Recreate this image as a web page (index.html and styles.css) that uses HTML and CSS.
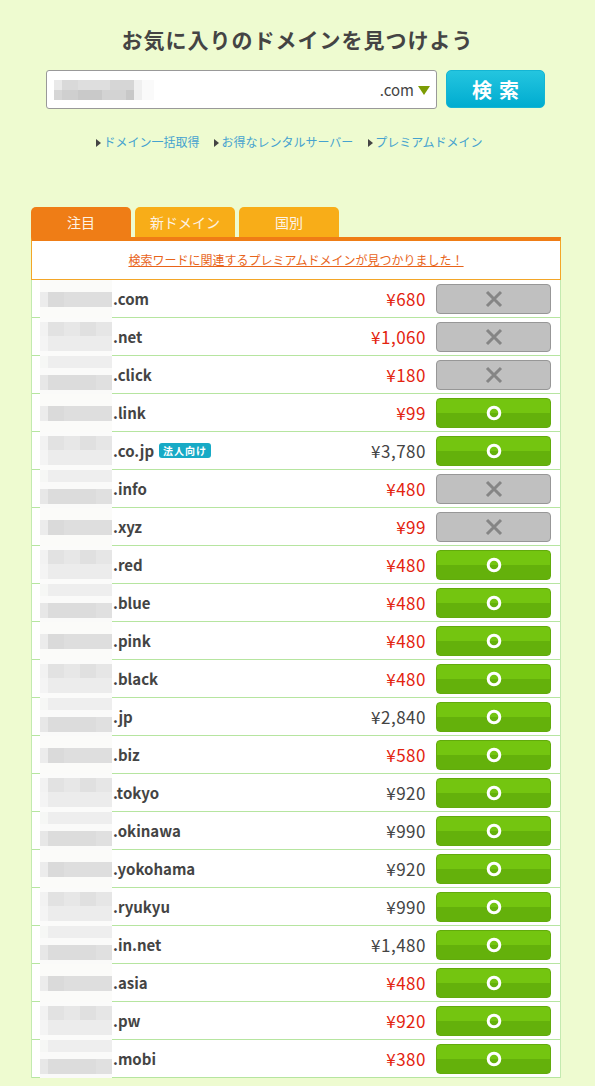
FILE: index.html
```html
<!DOCTYPE html>
<html lang="ja">
<head>
    <meta charset="UTF-8">
    <meta name="viewport" content="width=device-width, initial-scale=1.0">
    <title>ドメイン検索</title>
    <link rel="stylesheet" href="styles.css">
</head>
<body>
    <h1 class="title">お気に入りのドメインを見つけよう</h1>

    <div class="search">
        <div class="search-box">
            <span class="blur-text"></span>
            <span class="tld">.com</span>
            <span class="arrow"></span>
        </div>
        <button class="search-btn">検索</button>
    </div>

    <ul class="links">
        <li><a href="#">ドメイン一括取得</a></li>
        <li><a href="#">お得なレンタルサーバー</a></li>
        <li><a href="#">プレミアムドメイン</a></li>
    </ul>

    <div class="panel">
        <div class="tabs">
            <div class="tab active">注目</div>
            <div class="tab">新ドメイン</div>
            <div class="tab">国別</div>
        </div>
        <div class="notice"><a href="#">検索ワードに関連するプレミアムドメインが見つかりました！</a></div>

        <div class="list">
            <div class="row"><span class="blur b1"></span><span class="name">.com</span><span class="price">¥680</span><span class="btn ng"><svg width="18" height="18" viewBox="0 0 18 18"><path d="M2 2L16 16M16 2L2 16"/></svg></span></div>
            <div class="row"><span class="blur b2"></span><span class="name">.net</span><span class="price">¥1,060</span><span class="btn ng"><svg width="18" height="18" viewBox="0 0 18 18"><path d="M2 2L16 16M16 2L2 16"/></svg></span></div>
            <div class="row"><span class="blur b3"></span><span class="name">.click</span><span class="price">¥180</span><span class="btn ng"><svg width="18" height="18" viewBox="0 0 18 18"><path d="M2 2L16 16M16 2L2 16"/></svg></span></div>
            <div class="row"><span class="blur b1"></span><span class="name">.link</span><span class="price">¥99</span><span class="btn ok"><svg width="16" height="16" viewBox="0 0 16 16"><circle cx="8" cy="8" r="5.8"/></svg></span></div>
            <div class="row"><span class="blur b2"></span><span class="name">.co.jp</span><span class="badge">法人向け</span><span class="price normal">¥3,780</span><span class="btn ok"><svg width="16" height="16" viewBox="0 0 16 16"><circle cx="8" cy="8" r="5.8"/></svg></span></div>
            <div class="row"><span class="blur b3"></span><span class="name">.info</span><span class="price">¥480</span><span class="btn ng"><svg width="18" height="18" viewBox="0 0 18 18"><path d="M2 2L16 16M16 2L2 16"/></svg></span></div>
            <div class="row"><span class="blur b1"></span><span class="name">.xyz</span><span class="price">¥99</span><span class="btn ng"><svg width="18" height="18" viewBox="0 0 18 18"><path d="M2 2L16 16M16 2L2 16"/></svg></span></div>
            <div class="row"><span class="blur b2"></span><span class="name">.red</span><span class="price">¥480</span><span class="btn ok"><svg width="16" height="16" viewBox="0 0 16 16"><circle cx="8" cy="8" r="5.8"/></svg></span></div>
            <div class="row"><span class="blur b3"></span><span class="name">.blue</span><span class="price">¥480</span><span class="btn ok"><svg width="16" height="16" viewBox="0 0 16 16"><circle cx="8" cy="8" r="5.8"/></svg></span></div>
            <div class="row"><span class="blur b1"></span><span class="name">.pink</span><span class="price">¥480</span><span class="btn ok"><svg width="16" height="16" viewBox="0 0 16 16"><circle cx="8" cy="8" r="5.8"/></svg></span></div>
            <div class="row"><span class="blur b2"></span><span class="name">.black</span><span class="price">¥480</span><span class="btn ok"><svg width="16" height="16" viewBox="0 0 16 16"><circle cx="8" cy="8" r="5.8"/></svg></span></div>
            <div class="row"><span class="blur b3"></span><span class="name">.jp</span><span class="price normal">¥2,840</span><span class="btn ok"><svg width="16" height="16" viewBox="0 0 16 16"><circle cx="8" cy="8" r="5.8"/></svg></span></div>
            <div class="row"><span class="blur b1"></span><span class="name">.biz</span><span class="price">¥580</span><span class="btn ok"><svg width="16" height="16" viewBox="0 0 16 16"><circle cx="8" cy="8" r="5.8"/></svg></span></div>
            <div class="row"><span class="blur b2"></span><span class="name">.tokyo</span><span class="price normal">¥920</span><span class="btn ok"><svg width="16" height="16" viewBox="0 0 16 16"><circle cx="8" cy="8" r="5.8"/></svg></span></div>
            <div class="row"><span class="blur b3"></span><span class="name">.okinawa</span><span class="price normal">¥990</span><span class="btn ok"><svg width="16" height="16" viewBox="0 0 16 16"><circle cx="8" cy="8" r="5.8"/></svg></span></div>
            <div class="row"><span class="blur b1"></span><span class="name">.yokohama</span><span class="price normal">¥920</span><span class="btn ok"><svg width="16" height="16" viewBox="0 0 16 16"><circle cx="8" cy="8" r="5.8"/></svg></span></div>
            <div class="row"><span class="blur b2"></span><span class="name">.ryukyu</span><span class="price normal">¥990</span><span class="btn ok"><svg width="16" height="16" viewBox="0 0 16 16"><circle cx="8" cy="8" r="5.8"/></svg></span></div>
            <div class="row"><span class="blur b3"></span><span class="name">.in.net</span><span class="price normal">¥1,480</span><span class="btn ok"><svg width="16" height="16" viewBox="0 0 16 16"><circle cx="8" cy="8" r="5.8"/></svg></span></div>
            <div class="row"><span class="blur b1"></span><span class="name">.asia</span><span class="price">¥480</span><span class="btn ok"><svg width="16" height="16" viewBox="0 0 16 16"><circle cx="8" cy="8" r="5.8"/></svg></span></div>
            <div class="row"><span class="blur b2"></span><span class="name">.pw</span><span class="price">¥920</span><span class="btn ok"><svg width="16" height="16" viewBox="0 0 16 16"><circle cx="8" cy="8" r="5.8"/></svg></span></div>
            <div class="row"><span class="blur b3"></span><span class="name">.mobi</span><span class="price">¥380</span><span class="btn ok"><svg width="16" height="16" viewBox="0 0 16 16"><circle cx="8" cy="8" r="5.8"/></svg></span></div>
        </div>
    </div>
</body>
</html>
```

FILE: styles.css
```css
body{
    margin: 0;
    background-color: #eefbd0;
    font-family: "Noto Sans CJK JP", "Noto Sans", sans-serif;
    color: #444;
}
.title{
    margin: 24px 0 0 0;
    height: 30px;
    line-height: 30px;
    text-align: center;
    font-size: 21px;
    font-weight: bold;
    letter-spacing: 1px;
    color: #444;
}
.search{
    display: flex;
    margin: 16px 0 0 46px;
    gap: 9px;
}
.search-box{
    display: flex;
    align-items: center;
    box-sizing: border-box;
    width: 391px;
    height: 39px;
    padding: 0 6px 0 7px;
    background-color: white;
    border: 1px solid #999;
    border-radius: 3px;
}
.blur-text{
    width: 100px;
    height: 20px;
    background:
        linear-gradient(to right, #e9e9e9 0 8px, #d9d9d9 8px 24px, #dedede 24px 56px, #d6d6d6 56px 80px, #f0f0f0 80px 88px, #fafafa 88px) top / 100% 10px no-repeat,
        linear-gradient(to right, #d6d6d6 0 8px, #cfcfcf 8px 24px, #c9c9c9 24px 48px, #d3d3d3 48px 72px, #c8c8c8 72px 80px, #efefef 80px 88px, #fafafa 88px) bottom / 100% 10px no-repeat;
}
.tld{
    margin-left: auto;
    font-size: 15px;
    color: #444;
}
.arrow{
    width: 0;
    height: 0;
    margin: 1px 0 0 4px;
    border-left: 6px solid transparent;
    border-right: 6px solid transparent;
    border-top: 9px solid #7c9c05;
}
.search-btn{
    width: 99px;
    height: 38px;
    border: 1px solid #14b5d4;
    border-radius: 5px;
    background: linear-gradient(#24c5df, #00acd0);
    color: white;
    font-family: "Noto Sans CJK JP", sans-serif;
    font-size: 20px;
    font-weight: bold;
    letter-spacing: 7px;
    padding: 0 0 0 7px;
}
.links{
    display: flex;
    justify-content: center;
    gap: 15px;
    list-style: none;
    margin: 24px 0 0 0;
    padding: 0 16px 0 0;
    font-size: 12px;
    line-height: 18px;
}
.links li::before{
    content: "";
    display: inline-block;
    margin-right: 2px;
    border-top: 4px solid transparent;
    border-bottom: 4px solid transparent;
    border-left: 5px solid #444;
}
.links a{
    color: #45a2cf;
    text-decoration: none;
}
.panel{
    width: 530px;
    margin: 56px 0 0 31px;
}
.tabs{
    display: flex;
    gap: 4px;
}
.tab{
    width: 100px;
    height: 30px;
    line-height: 30px;
    text-align: center;
    font-size: 14px;
    color: #fdf3e4;
    background-color: #f8ad18;
    border-radius: 5px 5px 0 0;
}
.tab.active{
    background-color: #ef7d16;
}
.notice{
    border-top: 4px solid #ef7d16;
    border-left: 1px solid #f3a628;
    border-right: 1px solid #f3a628;
    border-bottom: 1px solid #f3a628;
    background-color: white;
    height: 38px;
    line-height: 38px;
    text-align: center;
    font-size: 12px;
}
.notice a{
    color: #e8641a;
}
.list{
    background-color: white;
    border-left: 1px solid #c3eab0;
    border-right: 1px solid #c3eab0;
}
.row{
    display: flex;
    align-items: center;
    height: 37px;
    border-bottom: 1px solid #b6e5a0;
    padding-right: 9px;
}
.blur{
    align-self: stretch;
    width: 72px;
    margin-left: 8px;
    margin-bottom: -1px;
    background-color: #fbfbfa;
}
.b1{
    background:
        linear-gradient(to right, #ececec 0 8px, #dadada 8px 24px, #dedede 24px 72px) center / 100% 15px no-repeat,
        #fbfbf9;
}
.b2{
    background:
        linear-gradient(to right, #f2f2f2 0 8px, #e2e2e2 8px 24px, #e7e7e7 24px 40px, #e0e0e0 40px 56px, #e6e6e6 56px 72px) 0 4px / 100% 14px no-repeat,
        linear-gradient(to right, #f4f4f4 0 8px, #ececec 8px 72px) 0 18px / 100% 15px no-repeat,
        #fbfbfa;
}
.b3{
    background:
        linear-gradient(to right, #f6f7f5 0 8px, #eeeeee 8px 72px) 0 0 / 100% 12px no-repeat,
        linear-gradient(to right, #e7e7e7 0 8px, #dcdcdc 8px 56px, #e0e0e0 56px 72px) 0 19px / 100% 15px no-repeat,
        #fafaf9;
}
.name{
    margin-left: 1px;
    font-size: 15px;
    font-weight: bold;
    color: #444;
}
.badge{
    margin-left: 5px;
    padding: 0 4px;
    height: 15px;
    line-height: 15px;
    border-radius: 3px;
    background-color: #17aac6;
    color: white;
    font-size: 10px;
    font-weight: bold;
    letter-spacing: 1px;
}
.price{
    margin-left: auto;
    margin-right: 10px;
    font-size: 17px;
    letter-spacing: 0.5px;
    color: #e3240f;
}
.price.normal{
    color: #444;
}
.btn{
    display: flex;
    align-items: center;
    justify-content: center;
    width: 115px;
    height: 30px;
    box-sizing: border-box;
    border-radius: 4px;
}
.btn.ng{
    background-color: #c0c0c0;
    border: 1px solid #979797;
}
.btn.ng path{
    stroke: #858585;
    stroke-width: 3;
    fill: none;
}
.btn.ok{
    background: linear-gradient(#74c510 0 50%, #64b10b 50% 100%);
    border: 1px solid #62ab0c;
}
.btn.ok circle{
    stroke: white;
    stroke-width: 3;
    fill: none;
}
```
